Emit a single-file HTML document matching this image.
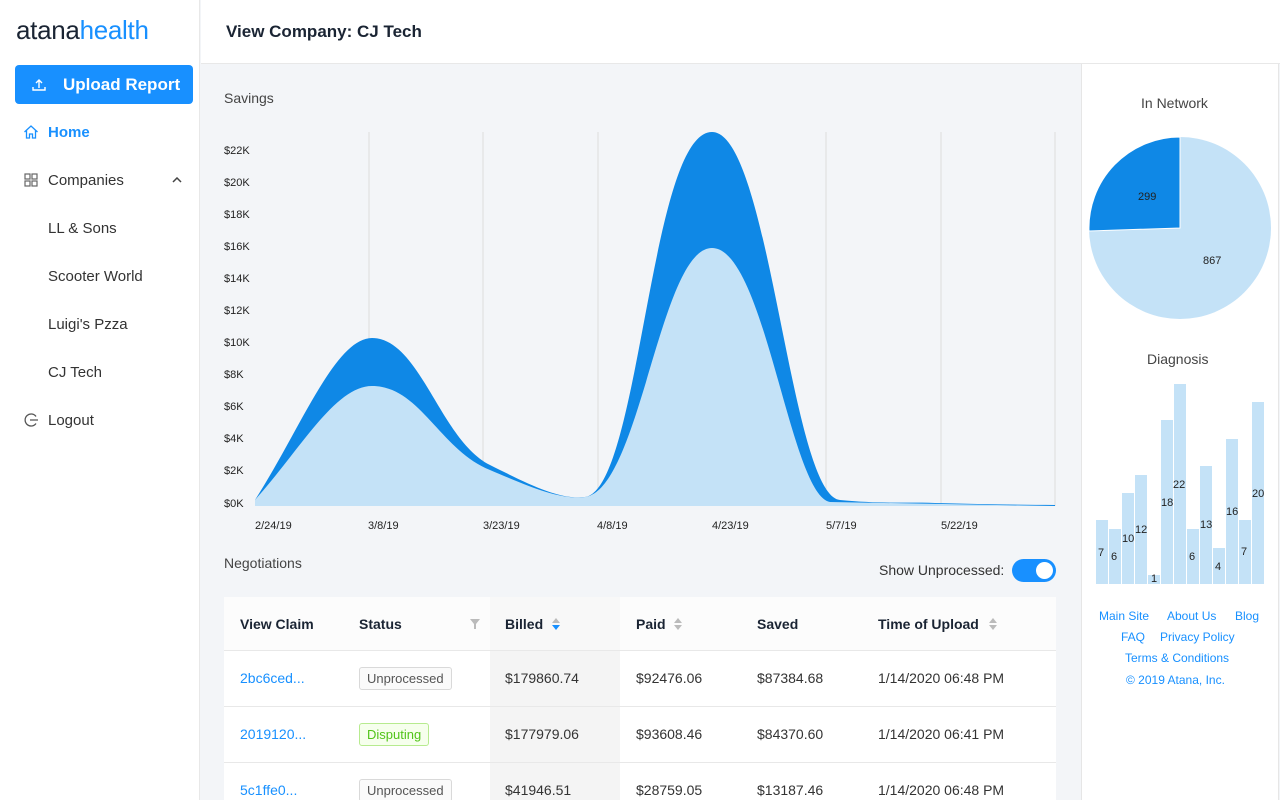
<!DOCTYPE html>
<html style="width:1280px;height:800px;overflow:hidden"><head><meta charset="utf-8"><style>
*{box-sizing:border-box;margin:0;padding:0}
body{width:1280px;height:800px;overflow:hidden;font-family:"Liberation Sans",sans-serif;background:#f3f5f8;position:relative;color:#222}
.side{position:absolute;left:0;top:0;width:200px;height:800px;background:#fff;border-right:1px solid #e8e8e8}
.logo{position:absolute;left:16px;top:15px;font-size:26px;letter-spacing:-0.3px;color:#1a2433}
.logo span{color:#1890ff}
.btn{position:absolute;left:15px;top:65px;width:178px;height:39px;background:#1890ff;border-radius:4px;color:#fff;font-size:17px;font-weight:bold}
.btn .t{position:absolute;left:48px;top:10px}
.nav{position:absolute;left:48px;font-size:15px;color:#333}
.top{position:absolute;left:201px;top:0;width:1079px;height:64px;background:#fff;border-bottom:1px solid #e8e8e8}
.top h1{position:absolute;left:25px;top:22px;font-size:17px;font-weight:bold;color:#1a2433}
.lbl{position:absolute;font-size:14px;color:#444}
.right{position:absolute;left:1081px;top:64px;width:198px;height:736px;background:#fff;border-left:1px solid #e6e6e6;border-right:1px solid #e6e6e6}
.tbl{position:absolute;left:224px;top:597px;width:832px;height:203px;background:#fff;overflow:hidden}
.th{position:absolute;top:0;height:53px;background:#fafafa;border-bottom:1px solid #e8e8e8;width:100%}
.c{position:absolute;font-size:14px;color:#333}
.h{font-weight:bold;color:#1a2433;top:19px}
.row{position:absolute;left:0;width:100%;height:56px;border-bottom:1px solid #e8e8e8}
.tag{position:absolute;left:135px;top:16px;height:23px;padding:0 7px;border:1px solid #d9d9d9;border-radius:3px;font-size:13px;line-height:21px;color:#555;background:#fafafa}
.link{color:#1890ff}
.ft{position:absolute;font-size:12px;color:#1890ff}
</style></head><body>
<div class="side">
<div class="logo">atana<span>health</span></div>
<div class="btn"><svg style="position:absolute;left:16px;top:12px" width="16" height="16" viewBox="0 0 16 16" fill="none" stroke="#fff" stroke-width="1.4"><path d="M8 11V3M5 6l3-3 3 3M2 10v3h12v-3"/></svg><span class="t">Upload Report</span></div>
<svg style="position:absolute;left:23px;top:124px" width="16" height="16" viewBox="0 0 16 16" fill="none" stroke="#1890ff" stroke-width="1.3"><path d="M1.5 8L8 2l6.5 6M3.5 6.5V14h3v-4h3v4h3V6.5"/></svg>
<div class="nav" style="top:124px;color:#1890ff;font-weight:bold">Home</div>
<svg style="position:absolute;left:24px;top:173px" width="14" height="14" viewBox="0 0 14 14" fill="none" stroke="#666" stroke-width="1.2"><rect x="1" y="1" width="5" height="5"/><rect x="8" y="1" width="5" height="5"/><rect x="1" y="8" width="5" height="5"/><rect x="8" y="8" width="5" height="5"/></svg>
<div class="nav" style="top:172px">Companies</div>
<svg style="position:absolute;left:172px;top:177px" width="10" height="6" viewBox="0 0 10 6" fill="none" stroke="#444" stroke-width="1.5"><path d="M1 5l4-4 4 4"/></svg>
<div class="nav" style="top:220px">LL &amp; Sons</div>
<div class="nav" style="top:268px">Scooter World</div>
<div class="nav" style="top:316px">Luigi's Pzza</div>
<div class="nav" style="top:364px">CJ Tech</div>
<svg style="position:absolute;left:23px;top:412px" width="16" height="16" viewBox="0 0 16 16" fill="none" stroke="#555" stroke-width="1.3"><path d="M13 4.5A6 6 0 1 0 13 11.5M7 8h8"/></svg>
<div class="nav" style="top:412px">Logout</div>
</div>
<div class="top"><h1>View Company: CJ Tech</h1></div>
<div class="lbl" style="left:224px;top:90px">Savings</div>
<svg style="position:absolute;left:220px;top:125px" width="845" height="410" viewBox="220 125 845 410">
<g stroke="#ddd" stroke-width="1"><path d="M369 132V506M483 132V506M598 132V506M712 132V506M826 132V506M941 132V506M1055 132V506"/></g>
<path d="M255 500 C300 430,335 338,372 338 C420 338,440 440,490 465 C530 485,560 500,585 497 C640 490,650 132,712 132 C770 132,790 495,840 500 C880 504,910 502,935 503 C980 504,1020 505,1055 505 L1055 506 L255 506Z" fill="#0f88e6"/>
<path d="M255 500 C300 450,335 386,372 386 C420 386,440 450,490 470 C530 487,560 500,585 497 C640 490,660 248,712 248 C765 248,790 495,830 502 L1055 506 L255 506Z" fill="#c4e2f7"/>
<g font-size="11" fill="#222" font-family="Liberation Sans">
<text x="224" y="154">$22K</text><text x="224" y="186">$20K</text><text x="224" y="218">$18K</text><text x="224" y="250">$16K</text><text x="224" y="282">$14K</text><text x="224" y="314">$12K</text><text x="224" y="346">$10K</text><text x="224" y="378">$8K</text><text x="224" y="410">$6K</text><text x="224" y="442">$4K</text><text x="224" y="474">$2K</text><text x="224" y="507">$0K</text>
<text x="255" y="529">2/24/19</text><text x="368" y="529">3/8/19</text><text x="483" y="529">3/23/19</text><text x="597" y="529">4/8/19</text><text x="712" y="529">4/23/19</text><text x="826" y="529">5/7/19</text><text x="941" y="529">5/22/19</text>
</g></svg>
<div class="lbl" style="left:224px;top:555px">Negotiations</div>
<div class="lbl" style="left:879px;top:562px;color:#333">Show Unprocessed:</div>
<div style="position:absolute;left:1012px;top:559px;width:44px;height:23px;border-radius:12px;background:#1890ff"><div style="position:absolute;right:3px;top:3px;width:17px;height:17px;border-radius:50%;background:#fff"></div></div>
<div class="tbl">
<div style="position:absolute;left:266px;top:0;width:130px;height:203px;background:#f4f4f4"></div>
<div class="row" style="top:0;height:54px;background:rgba(250,250,250,.6)"></div>
<div class="c h" style="left:16px">View Claim</div>
<div class="c h" style="left:135px">Status</div>
<svg style="position:absolute;left:246px;top:22px" width="10" height="10" viewBox="0 0 10 10"><path d="M0 0h10L6 5v5H4V5z" fill="#bbb"/></svg>
<div class="c h" style="left:281px">Billed</div>
<svg style="position:absolute;left:328px;top:21px" width="8" height="12"><path d="M4 0l4 5H0z" fill="#bbb"/><path d="M0 7h8l-4 5z" fill="#1890ff"/></svg>
<div class="c h" style="left:412px">Paid</div>
<svg style="position:absolute;left:450px;top:21px" width="8" height="12"><path d="M4 0l4 5H0z" fill="#bbb"/><path d="M0 7h8l-4 5z" fill="#bbb"/></svg>
<div class="c h" style="left:533px">Saved</div>
<div class="c h" style="left:654px">Time of Upload</div>
<svg style="position:absolute;left:765px;top:21px" width="8" height="12"><path d="M4 0l4 5H0z" fill="#bbb"/><path d="M0 7h8l-4 5z" fill="#bbb"/></svg>
<div class="row" style="top:54px"><div class="c link" style="left:16px;top:19px">2bc6ced...</div><div class="tag">Unprocessed</div><div class="c" style="left:281px;top:19px">$179860.74</div><div class="c" style="left:412px;top:19px">$92476.06</div><div class="c" style="left:533px;top:19px">$87384.68</div><div class="c" style="left:654px;top:19px">1/14/2020 06:48 PM</div></div>
<div class="row" style="top:110px"><div class="c link" style="left:16px;top:19px">2019120...</div><div class="tag" style="color:#52c41a;background:#f6ffed;border-color:#b7eb8f">Disputing</div><div class="c" style="left:281px;top:19px">$177979.06</div><div class="c" style="left:412px;top:19px">$93608.46</div><div class="c" style="left:533px;top:19px">$84370.60</div><div class="c" style="left:654px;top:19px">1/14/2020 06:41 PM</div></div>
<div class="row" style="top:166px;border:none"><div class="c link" style="left:16px;top:19px">5c1ffe0...</div><div class="tag">Unprocessed</div><div class="c" style="left:281px;top:19px">$41946.51</div><div class="c" style="left:412px;top:19px">$28759.05</div><div class="c" style="left:533px;top:19px">$13187.46</div><div class="c" style="left:654px;top:19px">1/14/2020 06:48 PM</div></div>
</div>
<div class="right"></div>
<div class="lbl" style="left:1141px;top:95px">In Network</div>
<svg style="position:absolute;left:1080px;top:130px" width="200" height="460" viewBox="1080 130 200 460">
<circle cx="1180" cy="228" r="91" fill="#c4e2f7"/>
<path d="M1180 228 L1180 137 A91 91 0 0 0 1089 231 Z" fill="#0f88e6" stroke="#fff" stroke-width="1"/>
<g font-size="11" fill="#222" font-family="Liberation Sans"><text x="1138" y="200">299</text><text x="1203" y="264">867</text></g>
<g fill="#c4e2f7">
<rect x="1096" y="520" width="12" height="64"/><rect x="1109" y="529" width="12" height="55"/><rect x="1122" y="493" width="12" height="91"/><rect x="1135" y="475" width="12" height="109"/><rect x="1148" y="575" width="12" height="9"/><rect x="1161" y="420" width="12" height="164"/><rect x="1174" y="384" width="12" height="200"/><rect x="1187" y="529" width="12" height="55"/><rect x="1200" y="466" width="12" height="118"/><rect x="1213" y="548" width="12" height="36"/><rect x="1226" y="439" width="12" height="145"/><rect x="1239" y="520" width="12" height="64"/><rect x="1252" y="402" width="12" height="182"/>
</g>
<g font-size="11" fill="#222" font-family="Liberation Sans">
<text x="1098" y="556">7</text><text x="1111" y="560">6</text><text x="1122" y="542">10</text><text x="1135" y="533">12</text><text x="1151" y="582">1</text><text x="1161" y="506">18</text><text x="1173" y="488">22</text><text x="1189" y="560">6</text><text x="1200" y="528">13</text><text x="1215" y="570">4</text><text x="1226" y="515">16</text><text x="1241" y="555">7</text><text x="1252" y="497">20</text>
</g></svg>
<div class="lbl" style="left:1147px;top:351px">Diagnosis</div>
<div class="ft" style="left:1099px;top:609px">Main Site</div>
<div class="ft" style="left:1167px;top:609px">About Us</div>
<div class="ft" style="left:1235px;top:609px">Blog</div>
<div class="ft" style="left:1121px;top:630px">FAQ</div>
<div class="ft" style="left:1160px;top:630px">Privacy Policy</div>
<div class="ft" style="left:1125px;top:651px">Terms &amp; Conditions</div>
<div class="ft" style="left:1126px;top:673px">© 2019 Atana, Inc.</div>
</body></html>
